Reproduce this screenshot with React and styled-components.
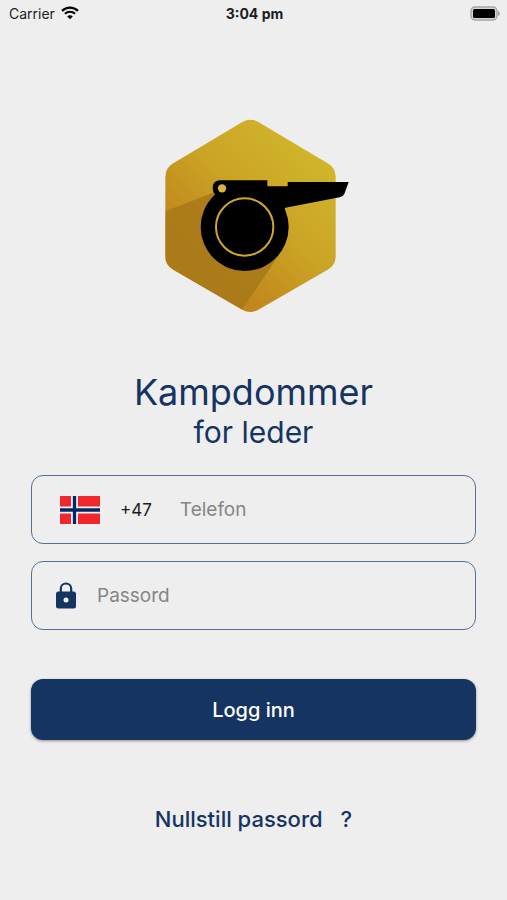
import React, { useState } from 'react';
import styled, { createGlobalStyle } from 'styled-components';

const GlobalStyle = createGlobalStyle`
  * {
    box-sizing: border-box;
  }

  body {
    margin: 0;
    background-color: #eeeeee;
    color: #1c1c1e;
    font-family: Inter, 'Liberation Sans', sans-serif;
  }
`;

// Styled components
const Screen = styled.div`
  display: flex;
  flex-direction: column;
  min-height: 100vh;
`;

const StatusBar = styled.header`
  display: grid;
  grid-template-columns: 1fr auto 1fr;
  align-items: center;
  height: 26px;
  padding: 0 7px 0 9px;
  font-size: 14px;
`;

const Carrier = styled.div`
  display: flex;
  align-items: center;
  gap: 6px;
`;

const Clock = styled.time`
  font-weight: 700;
`;

const BatteryIcon = styled.svg`
  justify-self: end;
`;

const Content = styled.main`
  display: flex;
  flex-direction: column;
  align-items: center;
  padding: 93px 31px 40px;
`;

const Title = styled.h1`
  margin: 56px 0 0;
  color: #153461;
  font-size: 36px;
  font-weight: 400;
  line-height: 46px;
  text-align: center;
`;

const Subtitle = styled.p`
  margin: 0;
  color: #153461;
  font-size: 30px;
  line-height: 34px;
`;

const Form = styled.form`
  display: flex;
  flex-direction: column;
  gap: 17px;
  width: 100%;
  margin-top: 26px;
`;

const Field = styled.label`
  display: flex;
  align-items: center;
  height: 69px;
  padding: 0 20px ${({ $inset }) => `0 ${$inset}`};
  border: 1px solid #566f93;
  border-radius: 12px;
`;

const DialCode = styled.span`
  margin: 0 28px 0 20px;
  font-size: 17px;
`;

const Input = styled.input`
  flex: 1;
  min-width: 0;
  padding: 0;
  border: none;
  outline: none;
  background: transparent;
  color: #1c1c1e;
  font-family: inherit;
  font-size: 19px;

  &::placeholder {
    color: #858585;
    opacity: 1;
  }
`;

const LockIcon = styled.svg`
  margin-right: 18px;
`;

const LoginButton = styled.button`
  height: 61px;
  margin-top: 32px;
  border: none;
  border-radius: 12px;
  background-color: #153461;
  box-shadow: 0 1px 3px rgba(0, 0, 0, 0.4);
  color: #ffffff;
  font-family: inherit;
  font-size: 20px;
  font-weight: 500;
  cursor: pointer;
`;

const ResetLink = styled.a`
  display: flex;
  gap: 18px;
  margin-top: 65px;
  color: #153461;
  font-size: 22px;
  font-weight: 500;
  line-height: 28px;
  text-decoration: none;
`;

const Wifi = () => (
  <svg width="18" height="14" viewBox="0 0 18 14" fill="none" stroke="#000" aria-hidden="true">
    <path d="M1 4.8C5.5 0.5 12.5 0.5 17 4.8" strokeWidth="2.3" />
    <path d="M3.9 7.8C6.8 5 11.2 5 14.1 7.8" strokeWidth="2.1" />
    <path d="M6.2 10.4C7.8 8.8 10.2 8.8 11.8 10.4L9 13.3Z" fill="#000" stroke="none" />
  </svg>
);

const Battery = () => (
  <BatteryIcon width="30" height="15" viewBox="0 0 30 15" aria-hidden="true">
    <rect x="1" y="1" width="26" height="13" rx="4" fill="#d4d4d4" stroke="#a6a6a6" strokeWidth="1.4" />
    <rect x="3" y="3" width="22" height="9" rx="1.5" fill="#000" />
    <path d="M28 5Q30 6 30 7.5T28 10Z" fill="#a6a6a6" />
  </BatteryIcon>
);

const Flag = () => (
  <svg width="40" height="28" viewBox="0 0 40 28" role="img" aria-label="Norge">
    <rect width="40" height="28" fill="#f0282d" />
    <path d="M14.5 0V28M0 14H40" stroke="#f4f1f4" strokeWidth="7" />
    <path d="M14.5 0V28M0 14H40" stroke="#002868" strokeWidth="3.3" />
  </svg>
);

const Lock = () => (
  <LockIcon width="26" height="30" viewBox="0 0 26 30" aria-hidden="true">
    <path d="M7.8 12V7.7a5.2 5.2 0 0 1 10.4 0V12" fill="none" stroke="#153461" strokeWidth="2.2" />
    <rect x="3" y="10.5" width="20" height="17" rx="2.5" fill="#153461" />
    <circle cx="13" cy="19" r="2.5" fill="#eeeeee" />
  </LockIcon>
);

const hexagon =
  'M262 36Q286 22 310 36L518 160Q542 174 542 200V440Q542 465 518 479L310 599Q286 613 262 599L55 479Q31 465 31 440V200Q31 174 55 160Z';

const Logo = () => (
  <svg width="191" height="194" viewBox="9 27 573 582" role="img" aria-label="Kampdommer">
    <defs>
      <linearGradient id="gold" gradientUnits="userSpaceOnUse" x1="450" y1="100" x2="132" y2="430">
        <stop offset="0" stopColor="#d0b52a" />
        <stop offset="0.5" stopColor="#cba425" />
        <stop offset="1" stopColor="#c0871c" />
      </linearGradient>
      <clipPath id="badge">
        <path d={hexagon} />
      </clipPath>
    </defs>
    <path d={hexagon} fill="url(#gold)" />
    <path
      d="M31 304L180 246L390 400C350 474 320 510 260 600L240 620H20Z"
      fill="#aa7a1a"
      fillOpacity="0.9"
      clipPath="url(#badge)"
    />
    <path d="M193 211H337V229H398V216H581L568 252Q564 260 554 262L391 293L360 330L160 290L181 255Q173 247 173 234Q173 213 193 211Z" />
    <circle cx="269" cy="351" r="132" />
    <circle cx="269" cy="351" r="86" fill="none" stroke="#d2a72c" strokeWidth="6" />
    <circle cx="201" cy="235" r="12.5" fill="#dcb440" />
  </svg>
);

const App = () => {
  const [phone, setPhone] = useState('');
  const [password, setPassword] = useState('');

  return (
    <Screen>
      <GlobalStyle />
      <StatusBar>
        <Carrier>
          Carrier
          <Wifi />
        </Carrier>
        <Clock>3:04 pm</Clock>
        <Battery />
      </StatusBar>
      <Content>
        <Logo />
        <Title>Kampdommer</Title>
        <Subtitle>for leder</Subtitle>
        <Form onSubmit={(e) => e.preventDefault()}>
          <Field $inset="28px">
            <Flag />
            <DialCode>+47</DialCode>
            <Input
              type="tel"
              placeholder="Telefon"
              aria-label="Telefon"
              value={phone}
              onChange={(e) => setPhone(e.target.value)}
            />
          </Field>
          <Field $inset="21px">
            <Lock />
            <Input
              type="password"
              placeholder="Passord"
              aria-label="Passord"
              value={password}
              onChange={(e) => setPassword(e.target.value)}
            />
          </Field>
          <LoginButton type="submit">Logg inn</LoginButton>
        </Form>
        <ResetLink href="#nullstill">
          <span>Nullstill passord</span>
          <span>?</span>
        </ResetLink>
      </Content>
    </Screen>
  );
};

export default App;
